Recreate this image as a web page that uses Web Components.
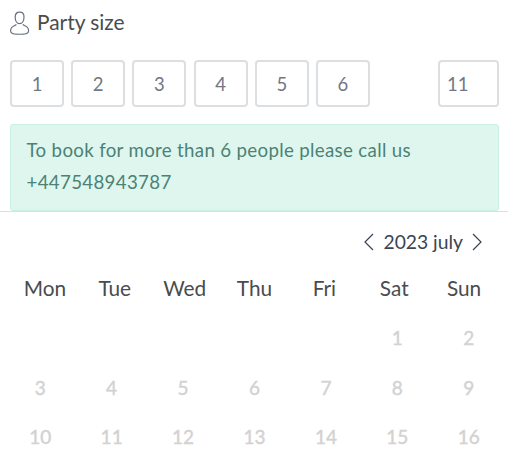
<!DOCTYPE html>
<html lang="en">
<head>
<meta charset="utf-8">
<title>Book a table</title>
<style>
 body {
  margin: 0;
  background: #fff;
  font-family: Lato, sans-serif;
  color: #4a4c4e;
 }
</style>
</head>
<body>
<booking-form></booking-form>
<script>
class PartySize extends HTMLElement {
 constructor() {
  super();
  this.attachShadow({ mode: 'open' });
 }

 connectedCallback() {
  const max = Number(this.getAttribute('max')) || 6;
  const sizes = Array.from({ length: max }, (_, i) => `<button>${i + 1}</button>`).join('');

  this.shadowRoot.innerHTML = `
   <style>
   :host {
    display: block;
   }

   .title {
    display: flex;
    align-items: flex-start;
    gap: 7px;
    height: 26px;
    font-size: 20.9px;
    line-height: 26px;
   }

   .title svg {
    margin-top: 1.5px;
   }

   .sizes {
    display: flex;
    gap: 7.2px;
    margin-top: 25px;
   }

   button, input {
    box-sizing: border-box;
    width: 54px;
    height: 47px;
    padding: 0;
    background: #fff;
    border: 2px solid #dbdfe2;
    border-radius: 4px;
    font: inherit;
    font-size: 18.5px;
    color: #717784;
   }

   input {
    width: 61px;
    margin-left: auto;
    padding: 0 7px;
   }
   </style>

   <div class="title">
    <svg width="20" height="24" viewBox="0 0 20 24" fill="none" stroke="#687080" stroke-width="1.2">
     <path d="M9.6 1.2C6.8 1.2 5.2 3 5.2 6C5.2 9.5 6.8 12.6 9.6 12.6S14 9.5 14 6C14 3 12.4 1.2 9.6 1.2Z"/>
     <path d="M6.4 13.4C5.6 14.5 3.2 15 1.8 16.4C.5 17.8 .1 20.8 1.6 21.9C3.4 23.7 15.8 23.7 17.6 21.9C19.1 20.8 18.7 17.8 17.4 16.4C16 15 13.6 14.5 12.8 13.4"/>
    </svg>
    <span>Party size</span>
   </div>
   <div class="sizes">${sizes}<input value="${this.getAttribute('value')}" aria-label="Other size"></div>
  `;
 }
}

class InfoAlert extends HTMLElement {
 constructor() {
  super();
  this.attachShadow({ mode: 'open' });
  this.shadowRoot.innerHTML = `
   <style>
   :host {
    display: block;
    box-sizing: border-box;
    height: 87px;
    padding: 9px 15.5px;
    background: #dff6ee;
    border: 1px solid #c9f0e2;
    border-radius: 3px;
    font-size: 18.7px;
    letter-spacing: .32px;
    line-height: 32px;
    color: #4b8275;
   }
   </style>
   <slot></slot>
  `;
 }
}

class MonthCalendar extends HTMLElement {
 constructor() {
  super();
  this.attachShadow({ mode: 'open' });
 }

 connectedCallback() {
  const days = ['Mon', 'Tue', 'Wed', 'Thu', 'Fri', 'Sat', 'Sun'];
  const offset = 5;
  const cells = Array.from({ length: 21 }, (_, i) => `<span>${i < offset ? '' : i - offset + 1}</span>`).join('');

  this.shadowRoot.innerHTML = `
   <style>
   :host {
    display: block;
    border-top: 1px solid #dedede;
   }

   nav {
    display: flex;
    justify-content: flex-end;
    align-items: center;
    gap: 9px;
    height: 59px;
    padding-right: 26px;
    font-size: 19.3px;
    color: #3a4553;
   }

   .days, .dates {
    display: grid;
    grid-template-columns: repeat(7, 1fr);
    text-align: center;
   }

   .days {
    padding: 0 9px 0 10px;
    font-size: 20.8px;
    line-height: 34px;
   }

   .dates {
    grid-auto-rows: 49.5px;
    align-items: center;
    margin-top: 8px;
    padding: 0 3.5px 0 4.5px;
    font-size: 19px;
    color: #d2d2d2;
    -webkit-text-stroke: .4px #d2d2d2;
   }
   </style>

   <nav>
    <svg width="10" height="18" viewBox="0 0 10 18" fill="none" stroke="currentColor" stroke-width="1.2"><path d="M9 1L1 9L9 17"/></svg>
    <span><slot></slot></span>
    <svg width="10" height="18" viewBox="0 0 10 18" fill="none" stroke="currentColor" stroke-width="1.2"><path d="M1 1L9 9L1 17"/></svg>
   </nav>
   <div class="days">${days.map(day => `<span>${day}</span>`).join('')}</div>
   <div class="dates">${cells}</div>
  `;
 }
}

class BookingForm extends HTMLElement {
 constructor() {
  super();
  this.attachShadow({ mode: 'open' });
  this.shadowRoot.innerHTML = `
   <style>
   :host {
    display: block;
    height: 464px;
    overflow: hidden;
   }

   .guests {
    padding: 9px 9px 0 10px;
   }

   info-alert {
    margin-top: 17px;
   }
   </style>
   <div class="guests">
    <party-size max="6" value="11"></party-size>
    <info-alert>To book for more than 6 people please call us<br>+447548943787</info-alert>
   </div>
   <month-calendar>2023 july</month-calendar>
  `;
 }
}

customElements.define('party-size', PartySize);
customElements.define('info-alert', InfoAlert);
customElements.define('month-calendar', MonthCalendar);
customElements.define('booking-form', BookingForm);
</script>
</body>
</html>
